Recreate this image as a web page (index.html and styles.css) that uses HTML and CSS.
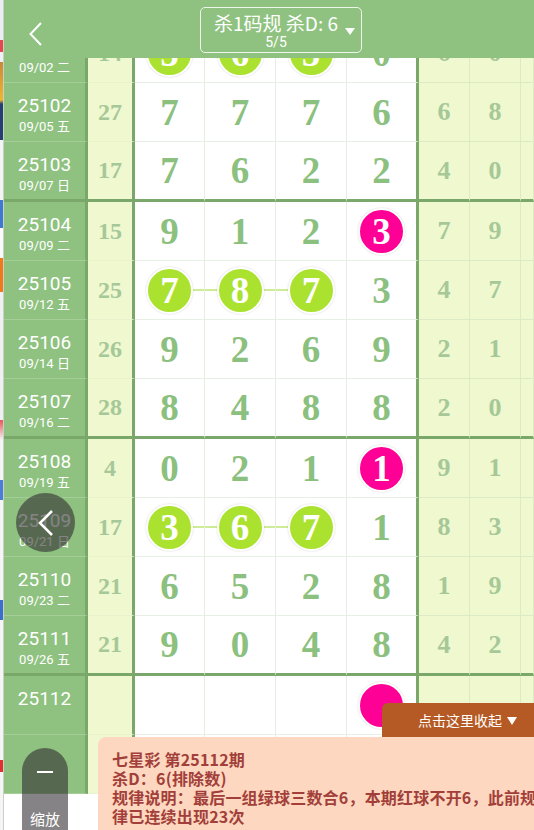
FILE: index.html
```html
<!DOCTYPE html>
<html lang="zh">
<head>
    <meta charset="UTF-8">
    <meta name="viewport" content="width=device-width, initial-scale=1.0">
    <title>七星彩 杀码规律</title>
    <link rel="stylesheet" href="styles.css">
</head>
<body>
    <div class="peek"></div>
    <div class="app">
        <div class="header">
            <svg class="back" width="14" height="24" viewBox="0 0 14 24"><path d="M12 1 L1.5 12 L12 23" fill="none" stroke="#fff" stroke-width="2"/></svg>
            <div class="picker">
                <div class="picker-title">杀1码规 杀D: 6</div>
                <div class="picker-sub">5/5</div>
                <span class="picker-arrow"></span>
            </div>
        </div>

        <div class="grid">
            <div class="row">
                <div class="per"><b>25101</b><span>09/02 二</span></div>
                <div class="cnt">14</div>
                <div class="n lk-s"><i class="ball">5</i></div>
                <div class="n lk-m"><i class="ball">6</i></div>
                <div class="n lk-e"><i class="ball">5</i></div>
                <div class="n last">0</div>
                <div class="r">6</div><div class="r">0</div><div class="r"></div>
            </div>
            <div class="row">
                <div class="per"><b>25102</b><span>09/05 五</span></div>
                <div class="cnt">27</div>
                <div class="n">7</div><div class="n">7</div><div class="n">7</div><div class="n last">6</div>
                <div class="r">6</div><div class="r">8</div><div class="r"></div>
            </div>
            <div class="row end">
                <div class="per"><b>25103</b><span>09/07 日</span></div>
                <div class="cnt">17</div>
                <div class="n">7</div><div class="n">6</div><div class="n">2</div><div class="n last">2</div>
                <div class="r">4</div><div class="r">0</div><div class="r"></div>
            </div>
            <div class="row">
                <div class="per"><b>25104</b><span>09/09 二</span></div>
                <div class="cnt">15</div>
                <div class="n">9</div><div class="n">1</div><div class="n">2</div>
                <div class="n last"><i class="ball red">3</i></div>
                <div class="r">7</div><div class="r">9</div><div class="r"></div>
            </div>
            <div class="row">
                <div class="per"><b>25105</b><span>09/12 五</span></div>
                <div class="cnt">25</div>
                <div class="n lk-s"><i class="ball">7</i></div>
                <div class="n lk-m"><i class="ball">8</i></div>
                <div class="n lk-e"><i class="ball">7</i></div>
                <div class="n last">3</div>
                <div class="r">4</div><div class="r">7</div><div class="r"></div>
            </div>
            <div class="row">
                <div class="per"><b>25106</b><span>09/14 日</span></div>
                <div class="cnt">26</div>
                <div class="n">9</div><div class="n">2</div><div class="n">6</div><div class="n last">9</div>
                <div class="r">2</div><div class="r">1</div><div class="r"></div>
            </div>
            <div class="row end">
                <div class="per"><b>25107</b><span>09/16 二</span></div>
                <div class="cnt">28</div>
                <div class="n">8</div><div class="n">4</div><div class="n">8</div><div class="n last">8</div>
                <div class="r">2</div><div class="r">0</div><div class="r"></div>
            </div>
            <div class="row">
                <div class="per"><b>25108</b><span>09/19 五</span></div>
                <div class="cnt">4</div>
                <div class="n">0</div><div class="n">2</div><div class="n">1</div>
                <div class="n last"><i class="ball red">1</i></div>
                <div class="r">9</div><div class="r">1</div><div class="r"></div>
            </div>
            <div class="row">
                <div class="per"><b>25109</b><span>09/21 日</span></div>
                <div class="cnt">17</div>
                <div class="n lk-s"><i class="ball">3</i></div>
                <div class="n lk-m"><i class="ball">6</i></div>
                <div class="n lk-e"><i class="ball">7</i></div>
                <div class="n last">1</div>
                <div class="r">8</div><div class="r">3</div><div class="r"></div>
            </div>
            <div class="row">
                <div class="per"><b>25110</b><span>09/23 二</span></div>
                <div class="cnt">21</div>
                <div class="n">6</div><div class="n">5</div><div class="n">2</div><div class="n last">8</div>
                <div class="r">1</div><div class="r">9</div><div class="r"></div>
            </div>
            <div class="row end">
                <div class="per"><b>25111</b><span>09/26 五</span></div>
                <div class="cnt">21</div>
                <div class="n">9</div><div class="n">0</div><div class="n">4</div><div class="n last">8</div>
                <div class="r">4</div><div class="r">2</div><div class="r"></div>
            </div>
            <div class="row">
                <div class="per"><b>25112</b><span></span></div>
                <div class="cnt"></div>
                <div class="n"></div><div class="n"></div><div class="n"></div>
                <div class="n last"><i class="ball red"></i></div>
                <div class="r"></div><div class="r"></div><div class="r"></div>
            </div>
            <div class="row">
                <div class="per"></div>
                <div class="cnt"></div>
                <div class="n"></div><div class="n"></div><div class="n"></div><div class="n last"></div>
                <div class="r"></div><div class="r"></div><div class="r"></div>
            </div>
        </div>

        <div class="fab">
            <svg width="16" height="26" viewBox="0 0 16 26"><path d="M14 1 L2 13 L14 25" fill="none" stroke="#fff" stroke-width="2.5"/></svg>
        </div>

        <div class="zoom-pill">
            <span class="minus"></span>
            <span class="zoom-label">缩放</span>
        </div>

        <div class="collapse">点击这里收起 <span class="tri"></span></div>
        <div class="info">
            <div>七星彩 第25112期</div>
            <div>杀D：6(排除数)</div>
            <div>规律说明：最后一组绿球三数合6，本期红球不开6，此前规</div>
            <div>律已连续出现23次</div>
        </div>
    </div>
</body>
</html>
```

FILE: styles.css
```css
html, body {
    margin: 0;
    padding: 0;
}
body {
    width: 534px;
    height: 830px;
    overflow: hidden;
    display: flex;
    background: #fff;
    font-family: Roboto, "Noto Sans CJK SC", sans-serif;
}
.peek {
    width: 4px;
    flex: none;
    border-right: 1px solid #c9d1c6;
    box-sizing: border-box;
    background: linear-gradient(to bottom,
        #e9eef3 0, #e9eef3 40px, #e5484d 40px, #e5484d 52px, #eef1f4 52px,
        #eef1f4 62px, #c78a3a 62px, #f1b62c 100px, #23406f 104px, #23406f 140px,
        #f3f4f6 140px, #f3f4f6 200px, #3f7ad2 200px, #3f7ad2 228px, #fafafa 228px,
        #fafafa 258px, #f07a1a 258px, #f07a1a 292px, #eef0f2 292px, #eef0f2 420px,
        #e85555 420px, #f5f5f5 440px, #f5f5f5 480px, #4a7ed8 480px, #4a7ed8 500px,
        #f5f5f5 500px, #f5f5f5 600px, #3a6fcc 600px, #3a6fcc 620px, #f5f5f5 620px,
        #f5f5f5 760px, #e03030 760px, #e03030 772px, #f5f5f5 772px);
}
.app {
    position: relative;
    flex: 1;
    overflow: hidden;
}

/* header */
.header {
    position: absolute;
    top: 0;
    left: 0;
    right: 0;
    height: 58px;
    background: #8fc280;
    z-index: 5;
}
.back {
    position: absolute;
    left: 25px;
    top: 22px;
}
.picker {
    position: absolute;
    left: 196px;
    top: 7px;
    width: 160px;
    height: 44px;
    border: 1px solid #eef6ea;
    border-radius: 5px;
    color: #fff;
    text-align: center;
}
.picker-title {
    font-family: "Noto Sans CJK SC", sans-serif;
    font-size: 19px;
    line-height: 22px;
    margin-top: 4px;
    margin-right: 10px;
}
.picker-sub {
    font-size: 14px;
    line-height: 16px;
    margin-right: 10px;
}
.picker-arrow {
    position: absolute;
    right: 6px;
    top: 20px;
    border-left: 5px solid transparent;
    border-right: 5px solid transparent;
    border-top: 7px solid #fff;
}

/* table */
.grid {
    margin-top: 24px;
}
.row {
    display: grid;
    grid-template-columns: 84px 47px 70px 71px 71px 72px 51px 51px 1fr;
    height: 59px;
}
.row.end {
    height: 60px;
}
.row > div {
    box-sizing: border-box;
    display: flex;
    align-items: center;
    justify-content: center;
    font-family: "Liberation Serif", serif;
    font-weight: bold;
}
.per {
    background: #8fc280;
    border-right: 3px solid #7aa86a;
    border-bottom: 1px solid #a4cd97;
    color: #fff;
    flex-direction: column;
    justify-content: flex-start !important;
    padding-top: 12px;
}
.row > .per {
    font-family: Roboto, "Noto Sans CJK SC", sans-serif;
    font-weight: normal;
}
.per b {
    font-weight: normal;
    font-size: 19px;
    line-height: 22px;
}
.per span {
    font-size: 13px;
    line-height: 20px;
}
.cnt {
    background: #f0f8d0;
    border-right: 3px solid #7aa86a;
    border-bottom: 1px solid #e8f2cc;
    color: #a6c898;
    font-size: 24px;
}
.n {
    background-color: #fff;
    border-right: 1px solid #e4eee1;
    border-bottom: 1px solid #e8f0e6;
    color: #8bc07e;
    font-size: 37px;
}
.n.last {
    border-right: 3px solid #7aa86a;
}
.r {
    background: #eff8cf;
    border-right: 1px solid #dcebc5;
    border-bottom: 1px solid #dcebc5;
    color: #a6c898;
    font-size: 26px;
}
.row.end > div {
    border-bottom: 3px solid #7aa86a;
}

/* balls and links */
.ball {
    width: 43px;
    height: 43px;
    border: 2px solid #fff;
    border-radius: 50%;
    box-shadow: 0 0 2px rgba(0, 0, 0, 0.18);
    background: #abe22f;
    color: #fff;
    font-style: normal;
    display: flex;
    align-items: center;
    justify-content: center;
}
.ball.red {
    background: #fe0096;
}
.lk-s, .lk-m, .lk-e {
    background-image: linear-gradient(#cdec95, #cdec95);
    background-repeat: no-repeat;
}
.lk-s {
    background-size: 50% 2px;
    background-position: right center;
}
.lk-m {
    background-size: 100% 2px;
    background-position: center;
}
.lk-e {
    background-size: 50% 2px;
    background-position: left center;
}

/* floating controls */
.fab {
    position: absolute;
    left: 12px;
    top: 493px;
    width: 59px;
    height: 59px;
    border-radius: 50%;
    background: rgba(45, 42, 45, 0.58);
    display: flex;
    align-items: center;
    justify-content: center;
    box-sizing: border-box;
}
.zoom-pill {
    position: absolute;
    left: 18px;
    top: 748px;
    width: 46px;
    height: 100px;
    border-radius: 23px 23px 0 0;
    background: rgba(45, 42, 45, 0.58);
    color: #fff;
    display: flex;
    flex-direction: column;
    align-items: center;
}
.minus {
    width: 16px;
    height: 2px;
    background: #fff;
    margin-top: 23px;
}
.zoom-label {
    font-family: "Noto Sans CJK SC", sans-serif;
    font-size: 15px;
    margin-top: 35px;
}

/* bottom panel */
.collapse {
    position: absolute;
    left: 378px;
    right: 0;
    top: 703px;
    height: 34px;
    background: #b55a24;
    border-radius: 6px 0 0 0;
    color: #fff;
    font-family: "Noto Sans CJK SC", sans-serif;
    font-size: 14px;
    line-height: 34px;
    padding-left: 36px;
    box-sizing: border-box;
    z-index: 3;
}
.tri {
    display: inline-block;
    border-left: 5px solid transparent;
    border-right: 5px solid transparent;
    border-top: 8px solid #fff;
    margin-left: 2px;
    vertical-align: 1px;
}
.info {
    position: absolute;
    left: 94px;
    right: 0;
    top: 737px;
    bottom: 0;
    background: #fdd7bf;
    border-radius: 8px 0 0 0;
    padding: 13px 0 0 14px;
    color: #a23f3a;
    font-family: "Noto Sans CJK SC", sans-serif;
    font-weight: bold;
    font-size: 16px;
    line-height: 19px;
    letter-spacing: 0.2px;
    white-space: nowrap;
    z-index: 2;
}
```
